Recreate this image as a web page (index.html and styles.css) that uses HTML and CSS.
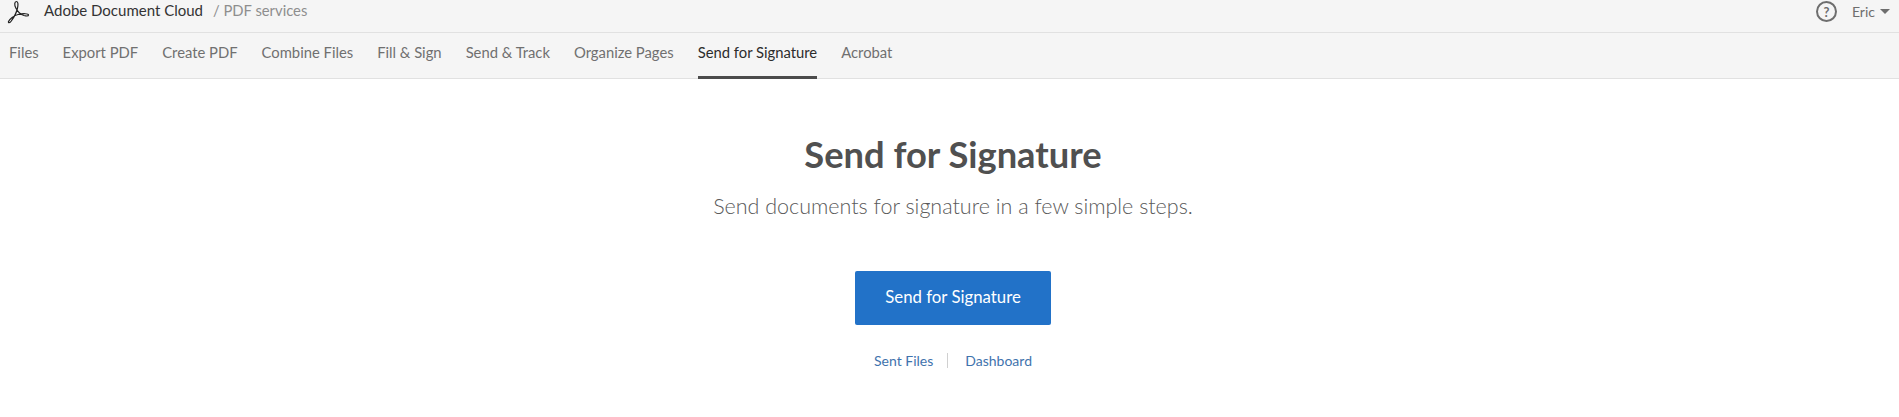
FILE: index.html
```html
<!DOCTYPE html>
<html lang="en">
<head>
<meta charset="utf-8">
<title>Send for Signature</title>
<link rel="stylesheet" href="styles.css">
</head>
<body>
<header class="topbar">
  <svg class="logo" viewBox="0 0 24 24" width="24" height="24" fill="none" stroke="#222" stroke-width="1.2" stroke-linejoin="round">
    <path d="M10.5 1.5C8.3 1.5 8.3 5 9.8 8C11.3 11 14.5 14.5 18 15.5C20 16 22.5 16.5 22.5 15C22.5 13.5 17 13.3 12 14.5C8 15.5 3.5 19 2.5 21.5C2 23.2 3.8 23.2 5.3 21C7.3 18.2 10.4 13 11.4 8.5C12.2 5 12.4 1.5 10.5 1.5Z"/>
  </svg>
  <span class="brand">Adobe Document Cloud</span>
  <span class="crumb">/ PDF services</span>
  <div class="spacer"></div>
  <span class="help">?</span>
  <span class="user">Eric</span>
  <span class="caret"></span>
</header>
<nav class="tabs">
  <a class="tab">Files</a>
  <a class="tab">Export PDF</a>
  <a class="tab">Create PDF</a>
  <a class="tab">Combine Files</a>
  <a class="tab">Fill &amp; Sign</a>
  <a class="tab">Send &amp; Track</a>
  <a class="tab">Organize Pages</a>
  <a class="tab active">Send for Signature</a>
  <a class="tab">Acrobat</a>
</nav>
<main class="hero">
  <h1 class="title">Send for Signature</h1>
  <p class="subtitle">Send documents for signature in a few simple steps.</p>
  <a class="cta">Send for Signature</a>
  <div class="links">
    <a class="link">Sent Files</a>
    <span class="sep"></span>
    <a class="link">Dashboard</a>
  </div>
</main>
</body>
</html>
```
FILE: styles.css
```css
* { box-sizing: border-box; }
html, body { margin: 0; padding: 0; }
body { background: #fff; font-family: "Lato", "Open Sans", sans-serif; color: #4b4b4b; height: 417px; overflow: hidden; }
.topbar { height: 33px; background: #f5f5f5; border-bottom: 1px solid #e1e1e1; display: flex; align-items: center; padding: 0 9px 9px 6px; }
.logo { flex: none; margin-right: 14px; }
.brand { font-size: 15px; color: #333; margin-bottom: 4px; }
.crumb { font-size: 14.8px; color: #8e8e8e; margin-left: 10px; margin-bottom: 4px; }
.spacer { flex: 1; }
.help { width: 21px; height: 21px; border: 2px solid #6e6e6e; border-radius: 50%; font-size: 13px; font-weight: 700; color: #6e6e6e; display: flex; align-items: center; justify-content: center; margin-right: 15px; }
.user { font-size: 14px; color: #6e6e6e; }
.caret { width: 0; height: 0; border-left: 5px solid transparent; border-right: 5px solid transparent; border-top: 5px solid #6e6e6e; margin-left: 5px; }
.tabs { height: 46px; background: #f5f5f5; border-bottom: 1px solid #e1e1e1; display: flex; gap: 24px; padding-left: 9px; }
.tab { font-size: 14.8px; color: #707070; height: 46px; display: flex; align-items: center; padding-bottom: 8px; }
.tab.active { color: #2c2c2c; border-bottom: 3px solid #4b4b4b; padding-bottom: 5px; }
.hero { display: flex; flex-direction: column; align-items: center; padding-left: 7px; }
.title { margin: 50px 0 0; font-size: 36.3px; line-height: 50px; font-weight: 700; color: #505050; }
.subtitle { margin: 11px 0 0; font-weight: 300; font-size: 21.5px; line-height: 32px; color: #5a5a5a; }
.cta { margin-top: 49px; width: 196px; height: 54px; background: #2272c8; border-radius: 2px; color: #fff; font-size: 16.8px; display: flex; align-items: center; justify-content: center; padding-bottom: 4px; }
.links { margin-top: 27px; display: flex; align-items: center; font-size: 14px; color: #3f73ad; }
.sep { width: 1px; height: 15px; background: #d0d0d0; margin: 0 17px 0 14px; }
```
